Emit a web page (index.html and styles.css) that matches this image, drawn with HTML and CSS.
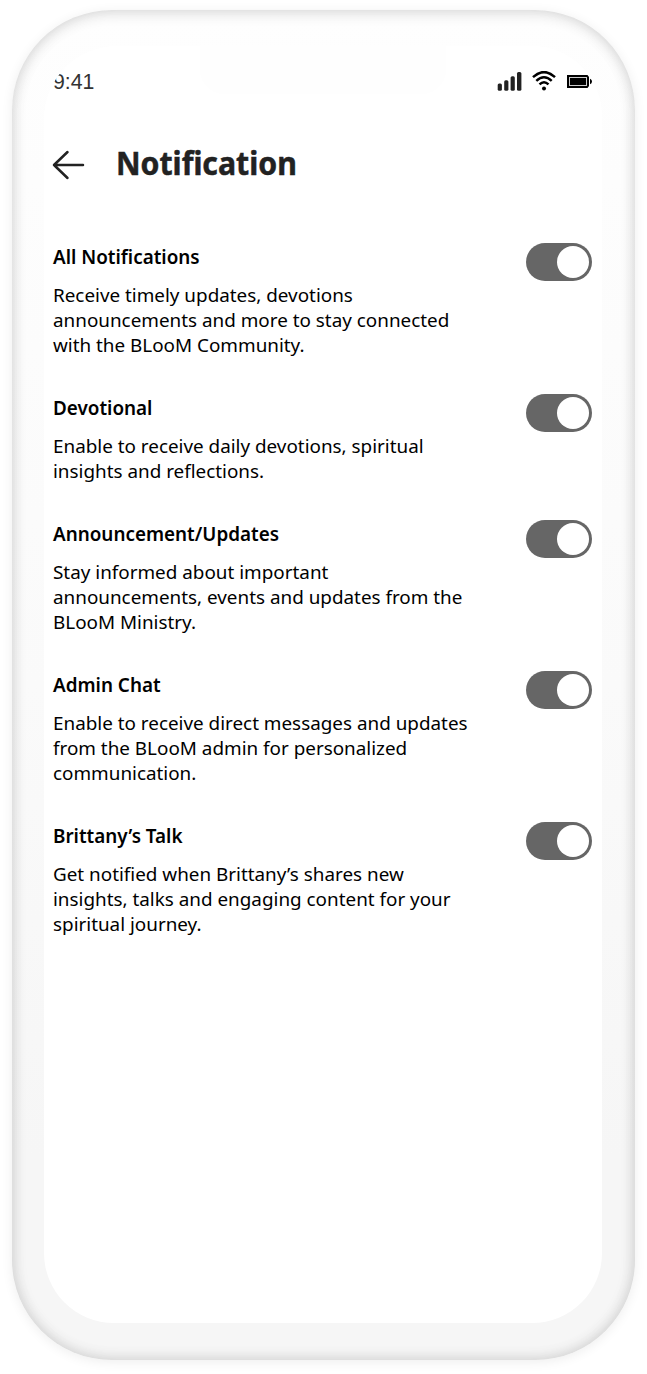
FILE: index.html
```html
<!DOCTYPE html>
<html lang="en">
<head>
<meta charset="utf-8">
<title>Notification</title>
<link rel="stylesheet" href="styles.css">
</head>
<body>
<div class="phone">
  <main class="screen">
    <div class="notch"></div>
    <div class="status">
      <span class="time">9:41</span>
      <svg class="status-icons" width="96" height="22" viewBox="0 0 96 22">
        <g fill="#222"><rect x="1.7" y="12.6" width="4.2" height="7.1" rx="1.5"/><rect x="8.2" y="9.2" width="4.2" height="10.5" rx="1.5"/><rect x="14.6" y="5.2" width="4.2" height="14.5" rx="1.5"/><rect x="21" y="1" width="4.4" height="18.7" rx="1.5"/></g>
        <g fill="none" stroke="#000" stroke-width="2.5"><path d="M37 6.2Q48 -4 59 6.2"/><path d="M40.3 9.8Q48 2.8 55.7 9.8"/><path d="M43.5 13.4Q48 9.2 52.5 13.4"/></g>
        <circle cx="48" cy="17.5" r="2"/>
        <path d="M71 4H91.5L93 6V15L91.5 17H71Z"/><rect x="73.5" y="6.5" width="17" height="8" fill="none" stroke="#ccc" stroke-width="1"/><path d="M94 7.8Q96 8.5 96 10.5Q96 12.5 94 13.2Z"/>
      </svg>
    </div>
    <header class="header">
      <svg class="back" width="33" height="30" viewBox="0 0 33 30" fill="none" stroke="#222" stroke-width="2.5" stroke-linecap="round" stroke-linejoin="round"><path d="M31 15H2M15.5 2L2 15L15.5 28"/></svg>
      <h1 class="title">Notification</h1>
    </header>
    <div class="settings">
      <section class="setting">
        <div class="copy"><h2 class="name">All Notifications</h2><p class="text">Receive timely updates, devotions<br>announcements and more to stay connected<br>with the BLooM Community.</p></div>
        <div class="toggle"><span class="knob"></span></div>
      </section>
      <section class="setting">
        <div class="copy"><h2 class="name">Devotional</h2><p class="text">Enable to receive daily devotions, spiritual<br>insights and reflections.</p></div>
        <div class="toggle"><span class="knob"></span></div>
      </section>
      <section class="setting">
        <div class="copy"><h2 class="name">Announcement/Updates</h2><p class="text">Stay informed about important<br>announcements, events and updates from the<br>BLooM Ministry.</p></div>
        <div class="toggle"><span class="knob"></span></div>
      </section>
      <section class="setting">
        <div class="copy"><h2 class="name">Admin Chat</h2><p class="text">Enable to receive direct messages and updates<br>from the BLooM admin for personalized<br>communication.</p></div>
        <div class="toggle"><span class="knob"></span></div>
      </section>
      <section class="setting">
        <div class="copy"><h2 class="name">Brittany’s Talk</h2><p class="text">Get notified when Brittany’s shares new<br>insights, talks and engaging content for your<br>spiritual journey.</p></div>
        <div class="toggle"><span class="knob"></span></div>
      </section>
    </div>
  </main>
</div>
</body>
</html>
```
FILE: styles.css
```css
* { box-sizing: border-box; margin: 0; }
body { background: #fff; padding: 10px 12px 14px; font-family: "Noto Sans", sans-serif; color: #000; }
.phone {
  width: 623px; height: 1350px; padding: 36px 33px 37px 32px; border-radius: 100px;
  background: linear-gradient(#fefefe, #fafafa 50%, #f6f6f6 85%);
  box-shadow: inset 0 0 15px rgba(0,0,0,.13), inset 0 4px 16px rgba(0,0,0,.06), inset 0 -4px 16px rgba(0,0,0,.03), 0 2px 12px rgba(0,0,0,.07);
}
.screen { position: relative; height: 1277px; border-radius: 73px 70px 70px 70px; background: #fff; padding: 25px 10px 0 9px; overflow: hidden; }
.notch { position: absolute; left: 156px; top: 0; width: 246px; height: 48px; border-radius: 0 0 24px 24px; background: #fefefe; }
.status { display: flex; justify-content: space-between; height: 22px; }
.time { font: 21.3px/22px "Liberation Sans", sans-serif; color: #333; }
.header { display: flex; align-items: center; height: 44px; margin-top: 48px; }
.back { margin: 3px 0 0 -1px; }
.title { margin-left: 31px; font-size: 32px; line-height: 44px; font-weight: 700; color: #222; transform: scaleX(.945); transform-origin: left; -webkit-text-stroke: .5px #222; }
.settings { display: flex; flex-direction: column; gap: 36px; margin-top: 58px; }
.setting { display: flex; justify-content: space-between; }
.copy { white-space: nowrap; }
.name { padding-top: 2px; font-size: 18.87px; line-height: 25px; font-weight: 600; }
.text { margin-top: 13px; font-size: 18.87px; line-height: 25px; }
.toggle { flex: none; width: 66px; height: 38px; padding: 3px; border-radius: 19px; background: #666; display: flex; justify-content: flex-end; }
.knob { width: 32px; height: 32px; border-radius: 50%; background: #fff; }
```
